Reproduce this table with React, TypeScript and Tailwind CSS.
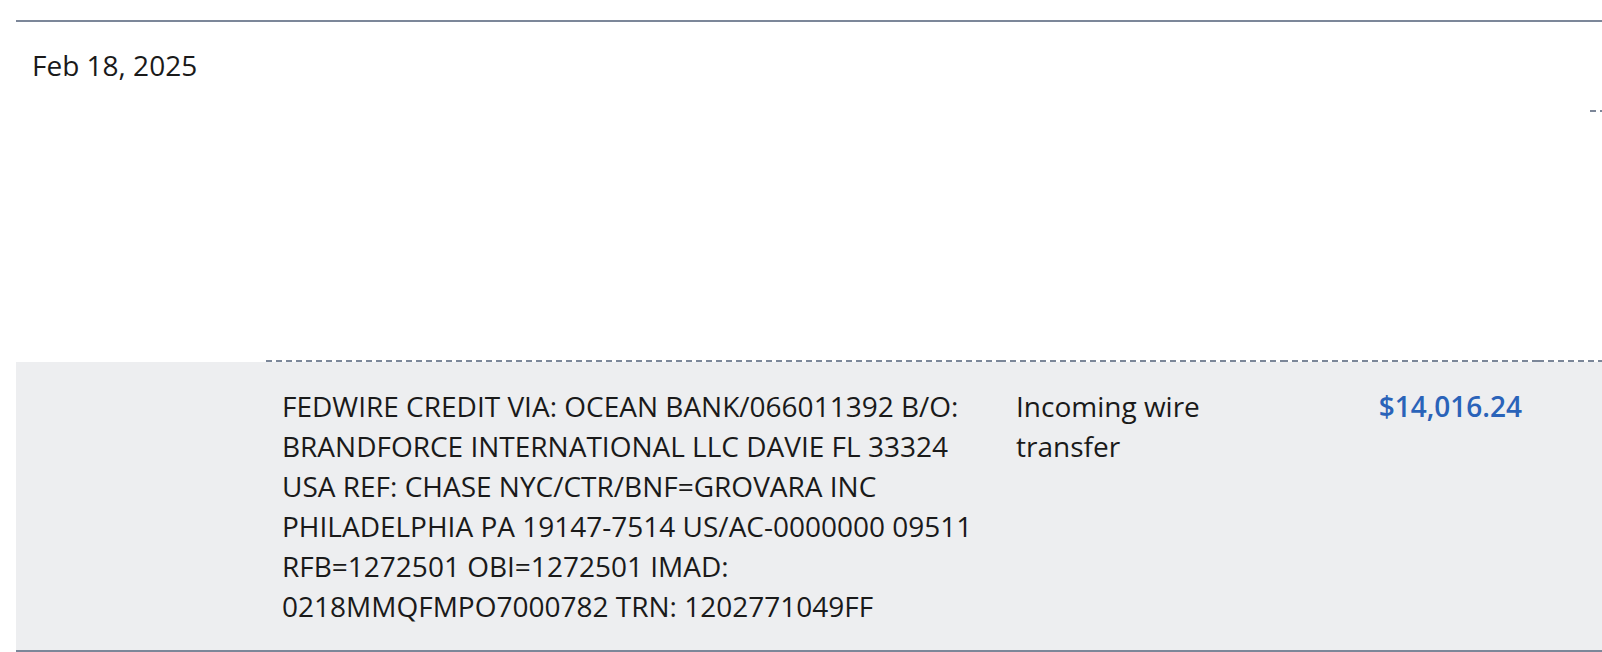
import React from "react";

const Dash = () => (
  <div className="h-[2px] w-full bg-white bg-[repeating-linear-gradient(90deg,#7c8799_0px,#7c8799_6px,transparent_6px,transparent_10px)]" />
);

export default function App() {
  const lines = [
    "FEDWIRE CREDIT VIA: OCEAN BANK/066011392 B/O:",
    "BRANDFORCE INTERNATIONAL LLC DAVIE FL 33324",
    "USA REF: CHASE NYC/CTR/BNF=GROVARA INC",
    "PHILADELPHIA PA 19147-7514 US/AC-0000000 09511",
    "RFB=1272501 OBI=1272501 IMAD:",
    "0218MMQFMPO7000782 TRN: 1202771049FF",
  ];
  return (
    <div className="w-[1602px] h-[652px] overflow-hidden bg-white font-['Open_Sans',sans-serif] text-[28px] leading-[40px] text-[#1a1a1a]">
      <div className="pt-5 pl-4 w-[2000px]">
        <div className="border-t-2 border-[#7c8799]">
          <div className="flex h-[338px]">
            <div className="w-[250px] shrink-0 pl-4 pt-[23px] whitespace-nowrap">Feb 18, 2025</div>
            <div className="w-[1272px] shrink-0" />
            <div className="w-[200px] shrink-0 pl-[52px] pt-[88px]">
              <Dash />
            </div>
          </div>
          <div className="flex border-b-2 border-[#7c8799]">
            <div className="w-[250px] shrink-0 flex flex-col">
              <div className="h-[2px] bg-white" />
              <div className="flex-1 bg-[#edeef0]" />
            </div>
            <div className="w-[734px] shrink-0 flex flex-col">
              <Dash />
              <div className="flex-1 bg-[#edeef0] px-4 pt-6 pb-6">
                {lines.map((l) => (
                  <div key={l} className="whitespace-nowrap">{l}</div>
                ))}
              </div>
            </div>
            <div className="w-[282px] shrink-0 flex flex-col">
              <Dash />
              <div className="flex-1 bg-[#edeef0] px-4 pt-6 pb-6">Incoming wire transfer</div>
            </div>
            <div className="w-[256px] shrink-0 flex flex-col">
              <Dash />
              <div className="flex-1 bg-[#edeef0] px-4 pt-6 pb-6 text-right font-semibold text-[#2a63b9]">$14,016.24</div>
            </div>
            <div className="w-[300px] shrink-0 flex flex-col">
              <Dash />
              <div className="flex-1 bg-[#edeef0]" />
            </div>
          </div>
        </div>
      </div>
    </div>
  );
}
